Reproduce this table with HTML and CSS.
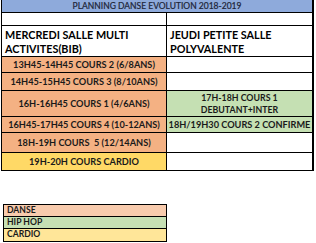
FILE: index.html
```html
<!DOCTYPE html>
<html>
<head>
<meta charset="utf-8">
<link rel="stylesheet" href="styles.css">
</head>
<body>
<div class="sheet">
  <div class="cell title">PLANNING DANSE EVOLUTION 2018-2019</div>
  <div class="cell blank"></div>
  <div class="cell blank"></div>
  <div class="cell head">MERCREDI SALLE MULTI<br>ACTIVITES(BIB)</div>
  <div class="cell head">JEUDI PETITE SALLE<br>POLYVALENTE</div>
  <div class="cell danse">13H45-14H45 COURS 2 (6/8ANS)</div>
  <div class="cell blank"></div>
  <div class="cell danse">14H45-15H45 COURS 3 (8/10ANS)</div>
  <div class="cell blank"></div>
  <div class="cell danse">16H-16H45 COURS 1 (4/6ANS)</div>
  <div class="cell hiphop two">17H-18H COURS 1<br>DEBUTANT+INTER</div>
  <div class="cell danse">16H45-17H45 COURS 4 (10-12ANS)</div>
  <div class="cell hiphop">18H/19H30 COURS 2 CONFIRME</div>
  <div class="cell danse">18H-19H COURS&nbsp; 5 (12/14ANS)</div>
  <div class="cell blank"></div>
  <div class="cell cardio">19H-20H COURS CARDIO</div>
  <div class="cell blank"></div>
</div>
<div class="legend">
  <div class="key k-danse">DANSE</div>
  <div class="key k-hiphop">HIP HOP</div>
  <div class="key k-cardio">CARDIO</div>
</div>
</body>
</html>
```
FILE: styles.css
```css
html, body {
  margin: 0;
  padding: 0;
  background: #ffffff;
}
body {
  font-family: Lato, "Liberation Sans", sans-serif;
  color: #1a1a1a;
  width: 316px;
  height: 243px;
  overflow: hidden;
}
.sheet {
  display: grid;
  grid-template-columns: 164px 145px;
  grid-template-rows: 12px 12px 30px 15px 17px 25px 15px 19px 17px;
  gap: 1px;
  padding: 0 1px 1px 1px;
  margin-left: 1px;
  width: 311px;
  background: #000000;
}
.cell {
  background: #ffffff;
  display: flex;
  align-items: center;
  justify-content: center;
  text-align: center;
  font-weight: 700;
  font-size: 9.2px;
  line-height: 10px;
  white-space: nowrap;
  overflow: hidden;
}
.title {
  grid-column: 1 / 3;
  background: #8eaadb;
  font-weight: 400;
  font-size: 8.5px;
  color: #1c2436;
  -webkit-text-stroke: 0.2px #1c2436;
}
.head {
  justify-content: flex-start;
  text-align: left;
  font-size: 10.8px;
  line-height: 14px;
  padding-left: 3px;
  padding-top: 2px;
  color: #000000;
}
.danse { background: #f4b183; }
.hiphop { background: #c5e0b3; }
.cardio { background: #ffd966; }
.two { line-height: 12px; font-size: 8.8px; }
.legend {
  margin: 33px 0 0 3px;
  width: 162px;
  border: 1px solid #000000;
  display: flex;
  flex-direction: column;
  gap: 1px;
  background: #000000;
}
.key {
  height: 11px;
  font-size: 8.6px;
  font-weight: 700;
  line-height: 11px;
  padding-left: 3px;
  color: #1a1a1a;
}
.k-danse { background: #f8cbad; }
.k-hiphop { background: #c6e0b4; }
.k-cardio { background: #ffe699; height: 12px; }
```
